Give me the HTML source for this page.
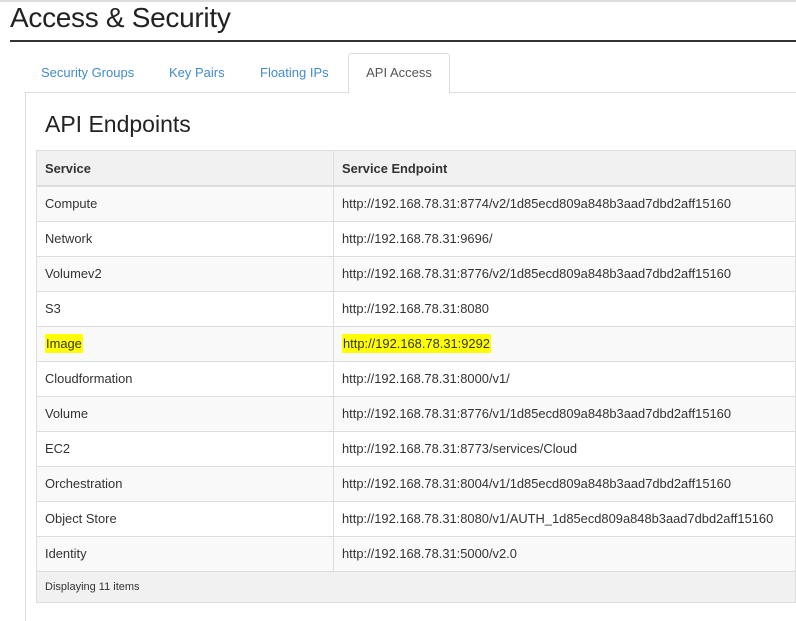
<!DOCTYPE html><html><head><style>
html,body{margin:0;width:796px;height:621px;overflow:hidden}
body{background:#fff;font-family:"Liberation Sans",sans-serif;position:relative}
.top{position:absolute;top:0;left:0;right:0;height:2px;background:#ddd}
h1{position:absolute;left:10px;top:2px;margin:0;font-weight:normal;font-size:28px;color:#222;font-family:"Liberation Sans",sans-serif;letter-spacing:-0.3px}
.ul{position:absolute;left:10px;right:0;top:40px;height:2px;background:#333}
.tab{position:absolute;top:65px;font-size:13px;color:#428bca}
.act{position:absolute;left:348px;top:53px;width:100px;height:40px;border:1px solid #ddd;border-bottom:none;background:#fff;border-radius:3px 3px 0 0;z-index:2}
.act span{display:block;text-align:center;margin-top:11px;font-size:13px;color:#555}
.panel{position:absolute;left:25px;top:92px;width:770px;height:528px;border:1px solid #ddd;border-bottom:none;border-right:none}
h2{position:absolute;left:45px;top:111px;margin:0;font-weight:normal;font-size:23px;color:#222;font-family:"Liberation Sans",sans-serif}
table{position:absolute;left:36px;top:150px;width:760px;border-collapse:collapse;font-size:12.9px;color:#333}
td,th{border:1px solid #ddd;height:34px;padding:0 8px;text-align:left;vertical-align:middle}
td{height:33px;padding-bottom:1px}
th{background:#f1f1f1;font-weight:bold;border-bottom:2px solid #ddd}
tr:nth-child(odd) td{background:#f9f9f9}
td.c1{width:280px}
mark{background:#ffff00;color:#333;padding:2px 1px}
tr.f td{background:#f1f1f1;font-size:11px;height:29px}
</style></head><body>
<div class="top"></div>
<h1>Access &amp; Security</h1>
<div class="ul"></div>
<div class="panel"></div>
<span class="tab" style="left:41px">Security Groups</span>
<span class="tab" style="left:169px">Key Pairs</span>
<span class="tab" style="left:260px">Floating IPs</span>
<div class="act"><span>API Access</span></div>
<h2>API Endpoints</h2>
<table>
<thead><tr><th class="c1">Service</th><th>Service Endpoint</th></tr></thead>
<tbody>
<tr><td class="c1">Compute</td><td>http://192.168.78.31:8774/v2/1d85ecd809a848b3aad7dbd2aff15160</td></tr>
<tr><td class="c1">Network</td><td>http://192.168.78.31:9696/</td></tr>
<tr><td class="c1">Volumev2</td><td>http://192.168.78.31:8776/v2/1d85ecd809a848b3aad7dbd2aff15160</td></tr>
<tr><td class="c1">S3</td><td>http://192.168.78.31:8080</td></tr>
<tr><td class="c1"><mark>Image</mark></td><td><mark>http://192.168.78.31:9292</mark></td></tr>
<tr><td class="c1">Cloudformation</td><td>http://192.168.78.31:8000/v1/</td></tr>
<tr><td class="c1">Volume</td><td>http://192.168.78.31:8776/v1/1d85ecd809a848b3aad7dbd2aff15160</td></tr>
<tr><td class="c1">EC2</td><td>http://192.168.78.31:8773/services/Cloud</td></tr>
<tr><td class="c1">Orchestration</td><td>http://192.168.78.31:8004/v1/1d85ecd809a848b3aad7dbd2aff15160</td></tr>
<tr><td class="c1">Object Store</td><td>http://192.168.78.31:8080/v1/AUTH_1d85ecd809a848b3aad7dbd2aff15160</td></tr>
<tr><td class="c1">Identity</td><td>http://192.168.78.31:5000/v2.0</td></tr>
<tr class="f"><td colspan="2">Displaying 11 items</td></tr>
</tbody></table>
</body></html>
